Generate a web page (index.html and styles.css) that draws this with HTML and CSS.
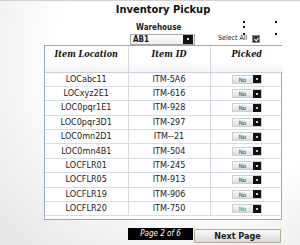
FILE: index.html
```html
<!DOCTYPE html>
<html>

<head>
  <meta content="width=device-width, initial-scale=1">
  <link rel="stylesheet" href="styles.css">
</head>

<body>
  <div id="Main" class="page">
    <h1 class="title">Inventory Pickup</h1>

    <div class="filters">
      <div class="warehouse">
        <div class="label">Warehouse</div>
        <div class="select">
          <span class="value">AB1</span>
          <span class="arrow"></span>
        </div>
      </div>
      <div class="select-all">
        <span>Select All</span>
        <span class="check"></span>
      </div>
      <!-- stray dots -->
      <svg class="dots" width="40" height="20" viewBox="0 0 40 20">
        <rect x="0" y="0" width="2" height="2" />
        <rect x="0" y="5" width="2" height="2" />
        <rect x="0" y="12" width="2" height="2" />
        <rect x="32" y="0" width="2" height="2" />
        <rect x="32" y="12" width="2" height="2" />
      </svg>
    </div>

    <div class="grid-box">
      <table class="grid">
        <col width="83px" />
        <col width="82px" />
        <col width="73px" />
        <tr>
          <th>Item Location</th>
          <th>Item ID</th>
          <th>Picked</th>
        </tr>
        <tr><td>LOCabc11</td><td>ITM-5A6</td><td><span class="mini"><span class="v">No</span><span class="btn"></span></span></td></tr>
        <tr><td>LOCxyz2E1</td><td>ITM-616</td><td><span class="mini"><span class="v">No</span><span class="btn"></span></span></td></tr>
        <tr><td>LOC0pqr1E1</td><td>ITM-928</td><td><span class="mini"><span class="v">No</span><span class="btn"></span></span></td></tr>
        <tr><td>LOC0pqr3D1</td><td>ITM-297</td><td><span class="mini"><span class="v">No</span><span class="btn"></span></span></td></tr>
        <tr><td>LOC0mn2D1</td><td>ITM--21</td><td><span class="mini"><span class="v">No</span><span class="btn"></span></span></td></tr>
        <tr><td>LOC0mn4B1</td><td>ITM-504</td><td><span class="mini"><span class="v">No</span><span class="btn"></span></span></td></tr>
        <tr><td>LOCFLR01</td><td>ITM-245</td><td><span class="mini"><span class="v">No</span><span class="btn"></span></span></td></tr>
        <tr><td>LOCFLR05</td><td>ITM-913</td><td><span class="mini"><span class="v">No</span><span class="btn"></span></span></td></tr>
        <tr><td>LOCFLR19</td><td>ITM-906</td><td><span class="mini"><span class="v">No</span><span class="btn"></span></span></td></tr>
        <tr><td>LOCFLR20</td><td>ITM-750</td><td><span class="mini"><span class="v green">No</span><span class="btn"></span></span></td></tr>
      </table>
    </div>

    <div class="pager">
      <span class="page-no">Page 2 of 6</span>
      <button class="next">Next Page</button>
    </div>
  </div>
</body>

</html>
```

FILE: styles.css
```css
html, body {
  margin: 0;
  padding: 0;
}

body {
  width: 300px;
  height: 245px;
  overflow: hidden;
  border-top: 1px solid #d2d2d2;
  box-sizing: border-box;
  background: radial-gradient(ellipse 260px 240px at 200px 60px, #ffffff 55%, #e9e9e9 100%);
  font-family: "DejaVu Sans Condensed", "DejaVu Sans", sans-serif;
  font-stretch: condensed;
  color: #1a1a1a;
}

.page {
  padding: 0 18px 0 44px;
}

.title {
  margin: 0;
  padding-top: 2px;
  font-size: 11px;
  line-height: 14px;
  font-weight: bold;
  text-align: center;
  color: #111;
}

.filters {
  position: relative;
  display: flex;
  align-items: flex-end;
  height: 28px;
}

.warehouse {
  margin-left: 86px;
  width: 65px;
}

.warehouse .label {
  font-size: 8px;
  line-height: 11px;
  font-weight: bold;
  padding-left: 6px;
  margin-bottom: 1px;
}

.select {
  display: flex;
  align-items: center;
  justify-content: space-between;
  height: 11px;
  border: 1px solid #a8a8a8;
  box-sizing: border-box;
  background: linear-gradient(#ffffff, #ececec);
  padding: 0 1px 0 2px;
}

.select .value {
  font-size: 8px;
  font-weight: bold;
  line-height: 9px;
}

.arrow {
  position: relative;
  width: 10px;
  height: 9px;
  background: #111;
}

.arrow:after {
  content: "";
  position: absolute;
  left: 4px;
  top: 3px;
  width: 2px;
  height: 2px;
  background: #ddd;
}

.select-all {
  display: flex;
  align-items: center;
  gap: 5px;
  margin-left: 23px;
  margin-bottom: 2px;
  font-size: 7px;
  line-height: 9px;
  color: #222;
}

.check {
  position: relative;
  width: 8px;
  height: 8px;
  background: #3a3a3a;
  border: 1px solid #888;
  box-sizing: border-box;
}

.check:after {
  content: "";
  position: absolute;
  left: 2px;
  top: 1px;
  width: 2px;
  height: 3px;
  border: solid #fff;
  border-width: 0 1px 1px 0;
  transform: rotate(40deg);
}

.dots {
  position: absolute;
  left: 199px;
  top: 4px;
  fill: #111;
}

.grid-box {
  width: 238px;
  border: 1px solid #97a9bb;
  box-sizing: border-box;
  background: #fff;
  padding-bottom: 3px;
}

.grid {
  border-collapse: collapse;
  table-layout: fixed;
  width: 236px;
}

.grid th {
  height: 26px;
  padding: 3px 0 0;
  vertical-align: top;
  font-family: "DejaVu Serif Condensed", "DejaVu Serif", serif;
  font-stretch: condensed;
  font-style: italic;
  font-weight: bold;
  font-size: 9px;
  line-height: 11px;
  color: #111;
  background: linear-gradient(#ffffff 60%, #f3f3f3);
  border-left: 1px solid #d3dae2;
  border-bottom: 1px solid #c9d2dc;
  box-sizing: border-box;
}

.grid td {
  height: 14.4px;
  padding: 0;
  text-align: center;
  font-size: 9px;
  line-height: 11px;
  color: #222;
  border-left: 1px solid #d3dae2;
  border-bottom: 1px solid #d6dde5;
  box-sizing: border-box;
}

.grid th:first-child,
.grid td:first-child {
  border-left: none;
}

.mini {
  display: inline-flex;
  align-items: center;
  justify-content: space-between;
  width: 30px;
  height: 9px;
  vertical-align: middle;
  background: linear-gradient(#fbfbfb, #dcdcdc);
  border: 1px solid #cfcfcf;
  box-sizing: border-box;
}

.mini .v {
  font-size: 6px;
  line-height: 7px;
  padding-left: 6px;
  color: #333;
}

.mini .v.green {
  color: #2c9a2c;
}

.mini .btn {
  position: relative;
  width: 8px;
  height: 8px;
  background: #111;
}

.mini .btn:after {
  content: "";
  position: absolute;
  left: 3px;
  top: 3px;
  width: 2px;
  height: 2px;
  background: #ccc;
}

.pager {
  display: flex;
  align-items: flex-start;
  gap: 1px;
  margin-top: 8px;
  padding-left: 84px;
}

.page-no {
  width: 65px;
  height: 12px;
  background: #000;
  color: #fff;
  font-style: italic;
  font-size: 8px;
  line-height: 12px;
  text-align: center;
}

.next {
  width: 87px;
  height: 14px;
  margin-top: 1px;
  padding: 0;
  border: 1px solid #b9a98a;
  border-radius: 1px;
  background: linear-gradient(#fafafa, #d9d9d9);
  font-family: "DejaVu Sans Condensed", "DejaVu Sans", sans-serif;
  font-stretch: condensed;
  font-size: 9px;
  font-weight: bold;
  color: #222;
}
```
